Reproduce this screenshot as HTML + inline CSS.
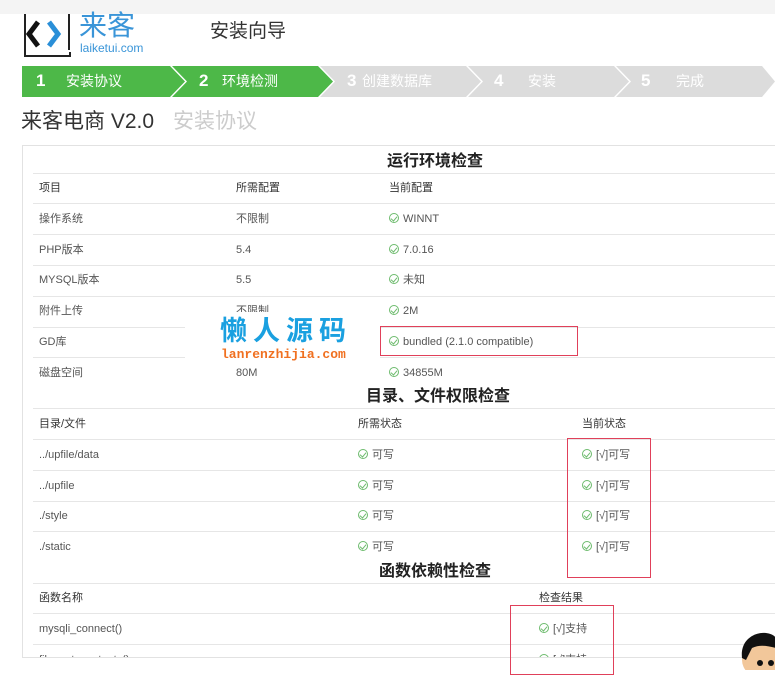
<!DOCTYPE html>
<html><head><meta charset="utf-8"><style>
*{margin:0;padding:0;box-sizing:border-box}
body{width:775px;height:670px;overflow:hidden;background:#fff;font-family:"Liberation Sans","Noto Sans CJK SC",sans-serif;position:relative;color:#444}
.a{position:absolute;white-space:nowrap}
.t{font-size:11px;color:#555;line-height:14px}
.h{font-size:11px;color:#333;line-height:14px}
.line{position:absolute;height:1px;background:#e6e6e6;left:32px;right:0}
.sec{font-size:16px;font-weight:bold;color:#222;line-height:20px}
.ck{display:inline-block;width:10px;height:10px;border:1px solid #6dbb6d;border-radius:50%;margin-right:4px;vertical-align:-1px;position:relative}
.ck:after{content:"";position:absolute;left:2px;top:1px;width:3px;height:5px;border:solid #6dbb6d;border-width:0 1px 1px 0;transform:rotate(40deg)}
.red{position:absolute;border:1px solid #e0405a}
.s{line-height:20px}
</style></head><body>
<div class="a" style="left:0;top:0;width:775px;height:14px;background:#f4f4f4"></div>
<svg class="a" style="left:24px;top:14px" width="48" height="44" viewBox="0 0 48 44">
<path d="M1 0V42H46V38" stroke="#222" stroke-width="2" fill="none"/>
<path d="M14 8L5 20L14 32" stroke="#111" stroke-width="5" fill="none"/>
<path d="M25 8L34 20L25 32" stroke="#2a8fd8" stroke-width="5" fill="none"/>
<path d="M45 0V36" stroke="#222" stroke-width="2"/>
</svg>
<div class="a" style="left:79px;top:9px;font-size:28px;color:#3a95d8;line-height:34px">来客</div>
<div class="a" style="left:80px;top:41px;font-size:12px;color:#3a95d8;line-height:14px">laiketui.com</div>
<div class="a" style="left:210px;top:20px;font-size:19px;color:#333;line-height:24px">安装向导</div>
<svg class="a" style="left:22px;top:66px" width="753" height="31">
<polygon points="0,0 148,0 163,15.5 148,31 0,31" fill="#4db848"/>
<polygon points="150,0 296,0 311,15.5 296,31 150,31 165,15.5" fill="#4db848"/>
<polygon points="298,0 444,0 459,15.5 444,31 298,31 313,15.5" fill="#dcdcdc"/>
<polygon points="446,0 592,0 607,15.5 592,31 446,31 461,15.5" fill="#dcdcdc"/>
<polygon points="594,0 740,0 753,15.5 740,31 594,31 609,15.5" fill="#dcdcdc"/>
</svg>
<div class="a s" style="left:36px;top:71px;color:#fff;font-size:17px;font-weight:bold">1</div>
<div class="a s" style="left:66px;top:71px;color:#fff;font-size:14px">安装协议</div>
<div class="a s" style="left:199px;top:71px;color:#fff;font-size:17px;font-weight:bold">2</div>
<div class="a s" style="left:222px;top:71px;color:#fff;font-size:14px">环境检测</div>
<div class="a s" style="left:347px;top:71px;color:#fff;font-size:17px;font-weight:bold">3</div>
<div class="a s" style="left:362px;top:71px;color:#fff;font-size:14px">创建数据库</div>
<div class="a s" style="left:494px;top:71px;color:#fff;font-size:17px;font-weight:bold">4</div>
<div class="a s" style="left:528px;top:71px;color:#fff;font-size:14px">安装</div>
<div class="a s" style="left:641px;top:71px;color:#fff;font-size:17px;font-weight:bold">5</div>
<div class="a s" style="left:676px;top:71px;color:#fff;font-size:14px">完成</div>
<div class="a" style="left:21px;top:108px;font-size:21px;color:#333;line-height:28px">来客电商 V2.0</div>
<div class="a" style="left:173px;top:108px;font-size:21px;color:#ccc;line-height:28px">安装协议</div>
<div class="a" style="left:22px;top:145px;width:760px;height:513px;border:1px solid #e2e2e2;overflow:hidden">
<div style="position:absolute;left:-22px;top:-145px;width:775px;height:670px">
<div class="a sec" style="left:386px;top:151px">运行环境检查</div>
<div class="line" style="top:172px"></div>
<div class="a h" style="left:38px;top:180px">项目</div><div class="a h" style="left:235px;top:180px">所需配置</div><div class="a h" style="left:388px;top:180px">当前配置</div>
<div class="line" style="top:202px"></div>
<div class="a t" style="left:38px;top:211px">操作系统</div><div class="a t" style="left:235px;top:211px">不限制</div><div class="a t" style="left:388px;top:211px"><span class="ck"></span>WINNT</div>
<div class="line" style="top:233px"></div>
<div class="a t" style="left:38px;top:242px">PHP版本</div><div class="a t" style="left:235px;top:242px">5.4</div><div class="a t" style="left:388px;top:242px"><span class="ck"></span>7.0.16</div>
<div class="line" style="top:264px"></div>
<div class="a t" style="left:38px;top:272px">MYSQL版本</div><div class="a t" style="left:235px;top:272px">5.5</div><div class="a t" style="left:388px;top:272px"><span class="ck"></span>未知</div>
<div class="line" style="top:295px"></div>
<div class="a t" style="left:38px;top:303px">附件上传</div><div class="a t" style="left:235px;top:303px">不限制</div><div class="a t" style="left:388px;top:303px"><span class="ck"></span>2M</div>
<div class="line" style="top:326px"></div>
<div class="a t" style="left:38px;top:334px">GD库</div><div class="a t" style="left:388px;top:334px"><span class="ck"></span>bundled (2.1.0 compatible)</div>
<div class="line" style="top:356px"></div>
<div class="a t" style="left:38px;top:365px">磁盘空间</div><div class="a t" style="left:235px;top:365px">80M</div><div class="a t" style="left:388px;top:365px"><span class="ck"></span>34855M</div>
<div class="a sec" style="left:365px;top:386px">目录、文件权限检查</div>
<div class="line" style="top:407px"></div>
<div class="a h" style="left:38px;top:416px">目录/文件</div><div class="a h" style="left:357px;top:416px">所需状态</div><div class="a h" style="left:581px;top:416px">当前状态</div>
<div class="line" style="top:438px"></div>
<div class="a t" style="left:38px;top:447px">../upfile/data</div><div class="a t" style="left:357px;top:447px"><span class="ck"></span>可写</div><div class="a t" style="left:581px;top:447px"><span class="ck"></span>[√]可写</div>
<div class="line" style="top:469px"></div>
<div class="a t" style="left:38px;top:478px">../upfile</div><div class="a t" style="left:357px;top:478px"><span class="ck"></span>可写</div><div class="a t" style="left:581px;top:478px"><span class="ck"></span>[√]可写</div>
<div class="line" style="top:500px"></div>
<div class="a t" style="left:38px;top:508px">./style</div><div class="a t" style="left:357px;top:508px"><span class="ck"></span>可写</div><div class="a t" style="left:581px;top:508px"><span class="ck"></span>[√]可写</div>
<div class="line" style="top:530px"></div>
<div class="a t" style="left:38px;top:539px">./static</div><div class="a t" style="left:357px;top:539px"><span class="ck"></span>可写</div><div class="a t" style="left:581px;top:539px"><span class="ck"></span>[√]可写</div>
<div class="a sec" style="left:378px;top:561px">函数依赖性检查</div>
<div class="line" style="top:582px"></div>
<div class="a h" style="left:38px;top:590px">函数名称</div><div class="a h" style="left:538px;top:590px">检查结果</div>
<div class="line" style="top:612px"></div>
<div class="a t" style="left:38px;top:621px">mysqli_connect()</div><div class="a t" style="left:538px;top:621px"><span class="ck"></span>[√]支持</div>
<div class="line" style="top:643px"></div>
<div class="a t" style="left:38px;top:652px">file_get_contents()</div><div class="a t" style="left:538px;top:652px"><span class="ck"></span>[√]支持</div>
</div></div>
<div class="a" style="left:185px;top:312px;width:195px;height:56px;background:#fff"></div>
<div class="a" style="left:220px;top:314px;font-size:27px;font-weight:bold;color:#1aa0e0;letter-spacing:6px;line-height:34px">懒人源码</div>
<div class="a" style="left:221px;top:347px;font-size:13px;font-weight:bold;color:#f07020;font-family:'Liberation Mono',monospace;line-height:16px">lanrenzhijia.com</div>
<div class="red" style="left:380px;top:326px;width:198px;height:30px"></div>
<div class="red" style="left:567px;top:438px;width:84px;height:140px"></div>
<div class="red" style="left:510px;top:605px;width:104px;height:70px"></div>
<svg class="a" style="left:740px;top:630px" width="35" height="40">
<ellipse cx="22" cy="30" rx="20" ry="18" fill="#f2c79a"/>
<path d="M2 28C0 10 14 2 26 3C34 4 36 8 36 8V18C28 16 20 14 12 18L6 30Z" fill="#111"/>
<circle cx="20" cy="33" r="3" fill="#111"/><circle cx="31" cy="33" r="3" fill="#111"/>
</svg>
</body></html>
